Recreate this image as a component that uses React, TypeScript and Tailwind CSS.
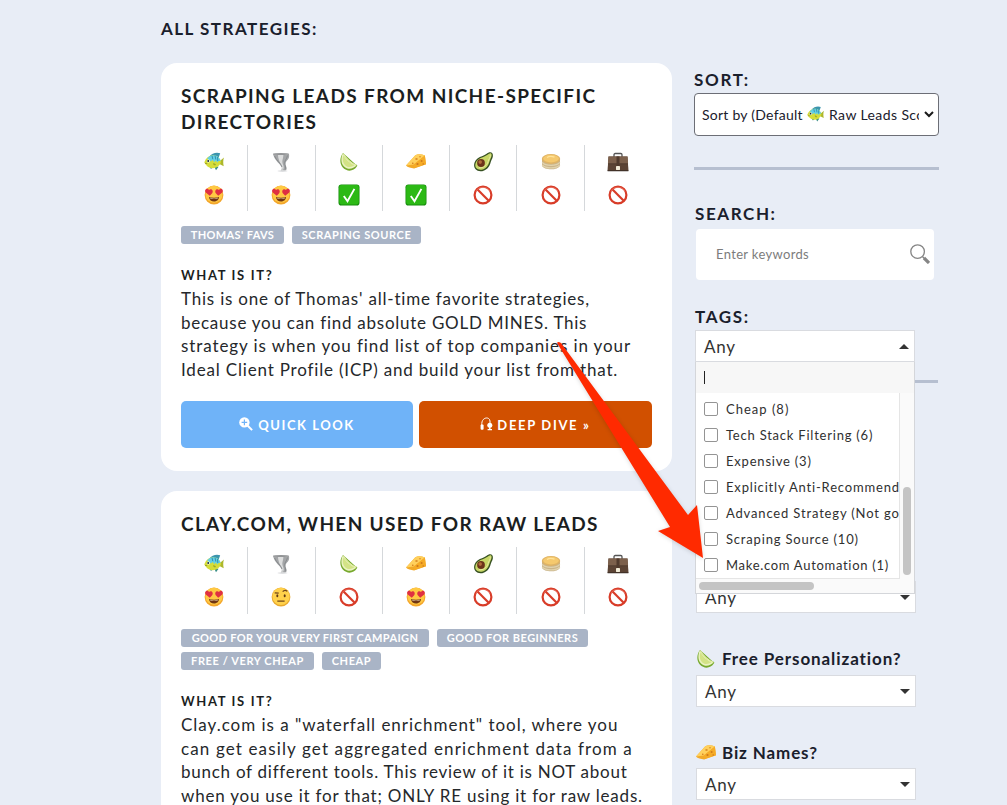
import type { FC, ReactNode } from "react";

type EmojiName =
  | "fish"
  | "tornado"
  | "lime"
  | "cheese"
  | "avocado"
  | "pancake"
  | "briefcase"
  | "love"
  | "eyebrow"
  | "check"
  | "no";

const drawings: Record<EmojiName, ReactNode> = {
  fish: (
    <>
      <path d="M5 5C8 .5 13 0 16.2 1.2L14.3 6.5Z" fill="#3b95ae" />
      <path d="M10 14l2 4.3 2.6-3.6zM5 14l2 3 2-2z" fill="#388d86" />
      <path d="M15 9.8L20 5.6c-.9 2-1 5.5-.3 8.6L15 11.7z" fill="#adb72b" />
      <path d="M.3 10.4C2 5.5 6 3 10 3.3c4 .3 6.5 4 7 6.7-1.5 4.1-4.7 6.3-8.5 6.2C5 16.1 2.2 13.8.3 10.4z" fill="#d5dd38" />
      <path d="M3.2 6.6C5 4.1 7.4 3.1 10 3.3c3.5.2 6 3 6.7 5.8L14.5 9l-1.2 1.5-1.5-1.9-1.6 1.6-1.4-2.1-2 1.3z" fill="#63cfe5" />
      <path d="M8 3.7l.8 3.5M11 3.5l.8 4M13.5 5l.3 4" stroke="#2583a0" strokeWidth=".8" />
      <circle cx="4.4" cy="9" r="1.5" fill="#fff" />
      <circle cx="4.2" cy="9" r="1" fill="#172b2d" />
      <path d="M1 11.4l2.2.1" stroke="#8a8425" strokeWidth=".7" />
      <path d="M9 11.3c1.6-.3 2.5.5 3 1.7-1.5.8-2.7.3-3-1.7z" fill="#9ca927" />
    </>
  ),
  tornado: (
    <>
      <path d="M2 1.8c5 1.5 11 1.3 16 .1.6 3-.2 5-2.4 7.1-2 2-1.2 3.8-.3 5.7.8 1.8.3 3.2-1 4.1H9.5c2.2-2 1.7-4-.7-6.4C6 9.5 3 6.8 2 1.8z" fill="#a3a5a7" />
      <path d="M7 2.7c2.2.6 4 .4 5.4.1-.2 4.4-1.9 6.4-.4 9.6 1.2 2.3.8 4.9-.6 6.4.8-4.4-4.4-9.4-4.4-16.1z" fill="#dcdddd" />
      <path d="M3.6 4c1.6 4.6 6.4 7 7.4 11M16.5 3.5c-.6 4-3.6 5-2.6 9 .5 1.8.9 3.4.3 5" fill="none" stroke="#85888a" strokeWidth=".9" />
      <ellipse cx="10" cy="2" rx="8" ry="1" fill="#939597" />
      <ellipse cx="11.5" cy="19.1" rx="5" ry=".8" fill="#dedfe1" />
    </>
  ),
  lime: (
    <>
      <path d="M4 1C.4 5.6.6 12 4 15.8c4 4 10.5 4 14-1.5.5-1 .3-1.6-1-1.5z" fill="#77a92d" />
      <path d="M3.7 1.4C1.6 6.2 2 11.5 5 14.4c3.6 3.3 8.8 3 12.6-.8C12.5 11.4 7 7 3.7 1.4z" fill="#eaf2c0" />
      <path d="M4.3 3.6C3.2 7.7 3.8 11 6 13.2c2.7 2.4 6 2.5 9.3.4C11 11 7 8 4.3 3.6z" fill="#d3e386" />
      <path d="M4.3 1.8C7.5 7 12 11.2 17.2 13.4" fill="none" stroke="#e3eea4" strokeWidth="1.2" />
    </>
  ),
  cheese: (
    <>
      <path d="M0 13.5L9.3 3.2c2.8-1.6 6.2-1 9.6.3l1.1 8.7-12 4.2C5 16.2 1.5 15.2 0 13.5z" fill="#f2a928" />
      <path d="M9.3 3.2c2.8-1.6 6.2-1 9.6.3L7.7 12.6.1 13.4z" fill="#ffd05c" />
      <path d="M7.9 12.6l11-9 1.1 8.6-12 4.1z" fill="#f5ab27" />
      <g fill="#cf7a1c">
        <ellipse cx="10.5" cy="7" rx="1.3" ry=".8" />
        <circle cx="11.5" cy="12" r="1.1" />
        <circle cx="15.6" cy="9" r="1" />
        <circle cx="17.2" cy="12" r=".8" />
        <circle cx="14" cy="4.8" r=".7" />
        <circle cx="6.8" cy="11.2" r=".8" />
      </g>
    </>
  ),
  avocado: (
    <>
      <path d="M19.3 1.2c1.2 1.8.5 4.4-.7 6.6-1.1 2.2-1.2 5.6-4 8.4-3.8 3.8-9.5 4-12 1.1C0 14.4.9 9.2 4.8 6.3 7.5 4.2 10.4 4.2 13.3 2c2-1.6 4.7-2.4 6-.8z" fill="#365021" />
      <path d="M18.2 1.6c1 1.3.2 3.5-.8 5.5-1.2 2.4-1.3 5.4-3.7 7.8-3.5 3.4-8.3 3.7-10.4 1.2C1.4 13.8 2.3 9.5 5.6 7.2c2.5-1.8 5.5-2.1 8.4-4.1 1.5-1.2 3.4-2.4 4.2-1.5z" fill="#c8d766" />
      <path d="M17.2 2.7c.5 3-1.6 4.2-2.2 7.2-.7 3.4-5.4 6.5-9 5.8" fill="none" stroke="#e6eba0" strokeWidth="1" />
      <circle cx="8" cy="11" r="3.9" fill="#6c341a" />
      <circle cx="7.2" cy="10.1" r="1.8" fill="#b16c3c" />
    </>
  ),
  pancake: (
    <>
      <path d="M1 7.2v6.3c1.3 5 16.2 5.3 18 0V7.2z" fill="#c9b48a" />
      <path d="M1.2 10.3c3.2 4 14.3 4.1 17.6 0M1.2 13c3.4 3.8 14.2 3.9 17.6 0" fill="none" stroke="#e2d3ad" strokeWidth="1.3" />
      <ellipse cx="10" cy="7" rx="9.2" ry="5" fill="#dfb365" />
      <ellipse cx="10" cy="6.6" rx="7.8" ry="3.8" fill="#f5c96e" />
      <path d="M6 5.5c2-1.3 5-1.3 7.5-.3" fill="none" stroke="#ffe39a" strokeWidth="1.3" />
    </>
  ),
  briefcase: (
    <>
      <path d="M6 5V2.7c0-.7.5-1.2 1.2-1.2h5.6c.7 0 1.2.5 1.2 1.2V5" fill="none" stroke="#555" strokeWidth="1.3" />
      <path d="M.5 4.4h19l1 14.6h-21z" fill="#5c4435" />
      <path d="M.5 4.4h19l.6 7.2H-.1z" fill="#7c604c" />
      <path d="M0 11.8h20" stroke="#49362c" strokeWidth=".6" />
      <path d="M8.5 4.4h3V14h-3z" fill="#503a2d" />
      <rect x="8" y="14" width="4" height="4" rx=".4" fill="#f3ecd8" />
      <path d="M-.4 18.8h20.8" stroke="#30251f" strokeWidth=".8" />
    </>
  ),
  love: (
    <>
      <circle cx="10" cy="10" r="9.4" fill="#f3a62b" />
      <circle cx="10" cy="9.2" r="8.5" fill="#ffc943" />
      <path d="M5.8 10.8L1.7 7.6C-.3 4.7 3.4 2.4 5 4.9c2.4-1.7 4.9.8 3.2 3.3zM14.2 10.8l-2.4-2.6c-1.7-2.5.8-5 3.2-3.3 1.6-2.5 5.3-.2 3.3 2.7z" fill="#df3042" />
      <path d="M5 12.1c3 .9 7 .9 10 0-.2 6-9.7 6-10 0z" fill="#713512" />
      <path d="M6 12.7c2.5.6 5.5.6 8 0l-.4.8H6.4z" fill="#fff1d0" />
    </>
  ),
  eyebrow: (
    <>
      <circle cx="10" cy="10" r="9.4" fill="#e9a92d" />
      <circle cx="10" cy="9.4" r="8.6" fill="#ffd14b" />
      <path d="M3.7 5.8l4 .4M11.7 4.7c1.3-1.7 3.4-1.5 4.5-.3M6.3 14.2h7.3" fill="none" stroke="#70451a" strokeWidth="1.2" />
      <ellipse cx="6.3" cy="8.7" rx="1" ry="1.5" fill="#613916" />
      <ellipse cx="13.7" cy="8.7" rx="1" ry="1.5" fill="#613916" />
    </>
  ),
  check: (
    <>
      <rect x="-.5" y="-.5" width="21" height="21" rx="2.8" fill="#168c0d" />
      <rect x=".2" y=".1" width="19.6" height="19.3" rx="2.3" fill="#2cb915" />
      <path d="M4.8 11l3.7 5.2L15.4 3.9" fill="none" stroke="#fff" strokeWidth="1.9" />
    </>
  ),
  no: (
    <>
      <circle cx="10" cy="10" r="8.4" fill="#fff" stroke="#d83c28" strokeWidth="2.2" />
      <path d="M4.3 4.3l11.4 11.4" stroke="#d83c28" strokeWidth="2.2" />
      <path d="M3 6.2C5.7 1 14.3 1 17 6.2" fill="none" stroke="#ef806e" strokeWidth=".6" />
    </>
  ),
};

const Emoji: FC<{ name: EmojiName; className?: string }> = ({ name, className = "size-5" }) => (
  <svg viewBox="0 0 20 20" className={`${className} shrink-0 overflow-visible`}>
    {drawings[name]}
  </svg>
);

type Line = { text: string; tracking: string };

interface Strategy {
  title: Line[];
  ratings: EmojiName[];
  gridClass: string;
  tags: Line[][];
  body: Line[];
}

const criteria: EmojiName[] = ["fish", "tornado", "lime", "cheese", "avocado", "pancake", "briefcase"];

const strategies: Strategy[] = [
  {
    title: [
      { text: "SCRAPING LEADS FROM NICHE-SPECIFIC", tracking: "tracking-[1.38px]" },
      { text: "DIRECTORIES", tracking: "tracking-[1.4px]" },
    ],
    ratings: ["love", "love", "check", "check", "no", "no", "no"],
    gridClass: "h-[66px]",
    tags: [
      [
        { text: "THOMAS' FAVS", tracking: "w-[103px] tracking-[0.36px]" },
        { text: "SCRAPING SOURCE", tracking: "w-[129px] tracking-[0.58px]" },
      ],
    ],
    body: [
      { text: "This is one of Thomas' all-time favorite strategies,", tracking: "tracking-[0.8px]" },
      { text: "because you can find absolute GOLD MINES. This", tracking: "tracking-[0.75px]" },
      { text: "strategy is when you find list of top companies in your", tracking: "tracking-[0.9px]" },
      { text: "Ideal Client Profile (ICP) and build your list from that.", tracking: "tracking-[0.82px]" },
    ],
  },
  {
    title: [{ text: "CLAY.COM, WHEN USED FOR RAW LEADS", tracking: "tracking-[1.34px]" }],
    ratings: ["love", "eyebrow", "no", "love", "no", "no", "no"],
    gridClass: "h-[67px]",
    tags: [
      [
        { text: "GOOD FOR YOUR VERY FIRST CAMPAIGN", tracking: "w-[248px] tracking-[0.36px]" },
        { text: "GOOD FOR BEGINNERS", tracking: "w-[151px] tracking-[0.49px]" },
      ],
      [
        { text: "FREE / VERY CHEAP", tracking: "w-[133px] tracking-[0.6px]" },
        { text: "CHEAP", tracking: "w-[59px] tracking-[0.62px]" },
      ],
    ],
    body: [
      { text: 'Clay.com is a "waterfall enrichment" tool, where you', tracking: "tracking-[0.97px]" },
      { text: "can get easily get aggregated enrichment data from a", tracking: "tracking-[1.13px]" },
      { text: "bunch of different tools. This review of it is NOT about", tracking: "tracking-[0.74px]" },
      { text: "when you use it for that; ONLY RE using it for raw leads.", tracking: "tracking-[0.79px]" },
    ],
  },
];

const StrategyCard: FC<{ strategy: Strategy }> = ({ strategy }) => (
  <article className="h-[408px] shrink-0 rounded-2xl bg-white px-5 pt-5">
    <h2 className="text-[19px] leading-[26px] font-bold text-[#1b1e21]">
      {strategy.title.map((line) => (
        <span key={line.text} className={`block whitespace-nowrap ${line.tracking}`}>
          {line.text}
        </span>
      ))}
    </h2>
    <div className={`mt-[10px] grid grid-cols-7 divide-x divide-[#d5d8db] ${strategy.gridClass}`}>
      {criteria.map((name, i) => (
        <div key={name} className="flex flex-col items-center gap-[13px] pt-[7px]">
          <Emoji name={name} />
          <Emoji name={strategy.ratings[i]} />
        </div>
      ))}
    </div>
    <div className="mt-[15px] flex flex-col gap-[5px]">
      {strategy.tags.map((row) => (
        <div key={row[0].text} className="flex gap-2">
          {row.map((tag) => (
            <span
              key={tag.text}
              className={`h-[18px] rounded-[3px] bg-[#a9b4c6] text-center text-[11px] leading-[18px] font-bold whitespace-nowrap text-white ${tag.tracking}`}
            >
              {tag.text}
            </span>
          ))}
        </div>
      ))}
    </div>
    <h3 className="mt-[21px] text-[13px] leading-5 font-bold tracking-[1.65px] text-[#1b1e21]">WHAT IS IT?</h3>
    <p className="mt-[2.4px] text-[17px] leading-[23.4px] text-[#25282b]">
      {strategy.body.map((line) => (
        <span key={line.text} className={`block whitespace-nowrap ${line.tracking}`}>
          {line.text}
        </span>
      ))}
    </p>
    <div className="mt-[19.6px] flex gap-1.5 text-[13px] font-bold text-white">
      <button className="flex h-[47px] w-[232px] items-center justify-center gap-[5px] rounded-[5px] bg-[#6fb3f8] tracking-[1.55px]">
        <svg viewBox="0 0 14 14" className="size-[14px]">
          <circle cx="5.4" cy="5.4" r="5.2" fill="#fff" />
          <path d="M8.5 8.5l4.6 4.6" stroke="#fff" strokeWidth="2" />
          <path d="M5.4 2.6v5.6M2.6 5.4h5.6" stroke="#6fb3f8" strokeWidth="1.2" />
        </svg>
        <span className="pt-[3px]">QUICK LOOK</span>
      </button>
      <button className="flex h-[47px] flex-1 items-center justify-center gap-1 rounded-[5px] bg-[#d15000] tracking-[1.66px]">
        <svg viewBox="0 0 13 14" className="h-[14px] w-[13px]">
          <path d="M1.8 9V6.5C2 .2 9.5-.8 10 4v2.5" fill="none" stroke="#fff" strokeWidth="1" />
          <rect x=".6" y="7.4" width="3" height="5.4" rx="1" fill="#fff" />
          <circle cx="9.8" cy="8.2" r="2.5" fill="#fff" />
          <path d="M9.8 9v4M7.6 12.6h4.4" fill="none" stroke="#fff" strokeWidth="1.4" />
        </svg>
        <span className="pt-[3px]">DEEP DIVE »</span>
      </button>
    </div>
  </article>
);

const Caret: FC<{ up?: boolean }> = ({ up }) => (
  <svg viewBox="0 0 10 5" className="h-[5px] w-[10px]">
    <path d={up ? "M0 5L5 0l5 5z" : "M0 0h10L5 5z"} fill="#333" />
  </svg>
);

const AnySelect: FC<{ up?: boolean }> = ({ up }) => (
  <div className="flex h-8 w-[220px] items-center justify-between border border-[#d9dbe0] bg-white pr-[5px] pl-2 text-[17px] tracking-[0.7px] text-[#333]">
    <span className="pt-px">Any</span>
    <Caret up={up} />
  </div>
);

const tagOptions: Line[] = [
  { text: "Cheap (8)", tracking: "tracking-[1px]" },
  { text: "Tech Stack Filtering (6)", tracking: "tracking-[0.78px]" },
  { text: "Expensive (3)", tracking: "tracking-[0.8px]" },
  { text: "Explicitly Anti-Recommended (2)", tracking: "tracking-[0.83px]" },
  { text: "Advanced Strategy (Not good for beginners)", tracking: "tracking-[0.84px]" },
  { text: "Scraping Source (10)", tracking: "tracking-[0.82px]" },
  { text: "Make.com Automation (1)", tracking: "tracking-[0.7px]" },
];

const TagsDropdown: FC = () => (
  <div className="absolute top-8 left-0 z-10 h-[232px] w-[220px] border border-t-0 border-[#d4d6da] bg-[#fafafa]">
    <div className="flex h-[31px] items-center bg-[#f7f7f7] pl-2">
      <span className="h-[13px] w-px bg-[#222]" />
    </div>
    <ul className="h-[186px] w-[204px] overflow-hidden border-r border-b border-[#e5e5e5] bg-white pt-[3px] pl-2 text-[13px] text-[#303030]">
      {tagOptions.map((option) => (
        <li key={option.text} className={`flex h-[26px] items-center gap-2 whitespace-nowrap ${option.tracking}`}>
          <span className="size-[14px] shrink-0 rounded-[2px] border border-[#949494] bg-white" />
          <span className="pt-[2px]">{option.text}</span>
        </li>
      ))}
    </ul>
    <div className="absolute top-[125px] right-[3px] h-[88px] w-2 rounded-full bg-[#c4c4c4]" />
    <div className="absolute bottom-[3px] left-[3px] h-2 w-[115px] rounded-full bg-[#c4c4c4]" />
  </div>
);

const Sidebar: FC = () => (
  <aside className="w-[245px] shrink-0 pt-[70px] text-[#1a202c]">
    <h4 className="text-[17px] leading-5 font-bold tracking-[1.66px]">SORT:</h4>
    <div className="mt-[3px] flex h-[43px] items-center rounded-[4px] border border-[#6c6e76] bg-white pr-1 pl-[7px] text-sm tracking-[0.25px]">
      <div className="flex w-[217px] items-center overflow-hidden whitespace-nowrap">
        <span className="w-[105px] shrink-0">Sort by (Default</span>
        <Emoji name="fish" className="size-[17px]" />
        <span className="pl-[5px] tracking-[0.4px]">Raw Leads Score)</span>
      </div>
      <svg viewBox="0 0 10 7" className="ml-auto h-[7px] w-[10px] shrink-0">
        <path d="M1 1l4 4 4-4" fill="none" stroke="#1a1a1a" strokeWidth="2" />
      </svg>
    </div>
    <div className="mt-[31px] h-[3px] bg-[#b6bfd0]" />

    <h4 className="mt-[34px] pl-px text-[17px] leading-5 font-bold tracking-[1.6px]">SEARCH:</h4>
    <div className="mt-[5px] ml-[2px] flex h-[51px] w-[238px] items-center justify-between rounded-[4px] bg-white pr-1 pl-5 text-[13px] tracking-[0.34px] text-[#7c7c7c]">
      Enter keywords
      <svg viewBox="0 0 20 20" className="mb-0.5 size-5">
        <circle cx="7.6" cy="7.6" r="6.8" fill="none" stroke="#858585" strokeWidth="1.3" />
        <path d="M12.4 12.4l2 2" stroke="#858585" strokeWidth="1.4" />
        <path d="M14 14l5 5" stroke="#858585" strokeWidth="3.2" />
      </svg>
    </div>

    <h4 className="mt-[27px] pl-px text-[17px] leading-5 font-bold tracking-[1.63px]">TAGS:</h4>
    <div className="relative mt-[3px] ml-px">
      <AnySelect up />
      <TagsDropdown />
    </div>
    <div className="mt-[18px] mr-px ml-[2px] h-[3px] bg-[#b6bfd0]" />
    <div className="mt-[198px] ml-[2px]">
      <AnySelect />
    </div>

    <h5 className="mt-9 ml-[2px] flex h-5 items-center gap-[6px] text-[17px] font-bold tracking-[0.9px] whitespace-nowrap">
      <Emoji name="lime" />
      <span>Free Personalization?</span>
    </h5>
    <div className="mt-[6px] ml-[2px]">
      <AnySelect />
    </div>
    <h5 className="mt-9 ml-[2px] flex h-5 items-center gap-[6px] text-[17px] font-bold tracking-[0.87px] whitespace-nowrap">
      <Emoji name="cheese" />
      <span>Biz Names?</span>
    </h5>
    <div className="mt-[5px] ml-[2px]">
      <AnySelect />
    </div>
  </aside>
);

export default function App() {
  return (
    <div className="relative flex h-[805px] w-[1007px] gap-[22px] overflow-hidden bg-[#e8edf6] pl-[161px] font-['Lato',sans-serif]">
      <main className="flex w-[511px] shrink-0 flex-col gap-5">
        <h1 className="-mb-5 h-[63px] shrink-0 pt-[19px] text-[17px] leading-5 font-bold tracking-[1.48px] text-[#1a202c]">
          ALL STRATEGIES:
        </h1>
        {strategies.map((strategy) => (
          <StrategyCard key={strategy.title[0].text} strategy={strategy} />
        ))}
      </main>
      <Sidebar />
      <svg
        viewBox="0 0 150 220"
        className="pointer-events-none absolute top-[340px] left-[555px] z-20 h-[220px] w-[150px] drop-shadow-sm"
      >
        <path d="M2 3Q3 1 6 3L133 175l9-10 6 53-45-27 12-4z" fill="#ff2a00" />
      </svg>
    </div>
  );
}
